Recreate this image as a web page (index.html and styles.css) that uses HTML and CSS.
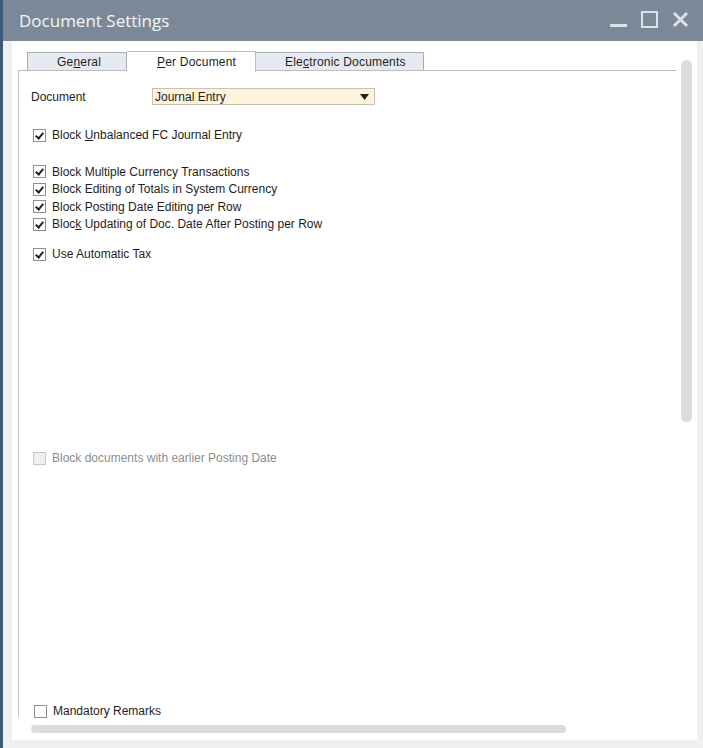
FILE: index.html
```html
<!DOCTYPE html>
<html lang="en">
<head>
    <meta charset="UTF-8">
    <title>Document Settings</title>
    <link rel="stylesheet" href="styles.css">
</head>
<body>
    <div class="window">
        <div class="titlebar">
            <div class="title">Document Settings</div>
            <div class="window-buttons">
                <svg class="win-btn" width="20" height="20" viewBox="0 0 20 20"><rect x="1" y="13" width="17" height="3" fill="#dde2e8"/></svg>
                <svg class="win-btn" width="20" height="20" viewBox="0 0 20 20"><rect x="2" y="1" width="15" height="15" fill="none" stroke="#dde2e8" stroke-width="2"/></svg>
                <svg class="win-btn" width="20" height="20" viewBox="0 0 20 20"><path d="M3 2 L16 15 M16 2 L3 15" stroke="#dde2e8" stroke-width="3"/></svg>
            </div>
        </div>

        <div class="main">
            <div class="content">
                <div class="tabs">
                    <div class="tab">Ge<u>n</u>eral</div>
                    <div class="tab active"><u>P</u>er Document</div>
                    <div class="tab">Ele<u>c</u>tronic Documents</div>
                </div>

                <div class="pane">
                    <div class="field-row">
                        <div class="field-label">Document</div>
                        <div class="dropdown">
                            <span>Journal Entry</span>
                            <svg width="9" height="6" viewBox="0 0 9 6"><path d="M0 0 L9 0 L4.5 6 Z" fill="#222"/></svg>
                        </div>
                    </div>

                    <div class="group group-first">
                        <label class="check-row"><span class="box checked"></span><span>Block <u>U</u>nbalanced FC Journal Entry</span></label>
                    </div>

                    <div class="group">
                        <label class="check-row"><span class="box checked"></span><span>Block Multiple Currency Transactions</span></label>
                        <label class="check-row"><span class="box checked"></span><span>Block Editing of Totals in System Currency</span></label>
                        <label class="check-row"><span class="box checked"></span><span>Block Posting Date Editing per Row</span></label>
                        <label class="check-row"><span class="box checked"></span><span>Bloc<u>k</u> Updating of Doc. Date After Posting per Row</span></label>
                    </div>

                    <div class="group group-tax">
                        <label class="check-row"><span class="box checked"></span><span>Use Automatic Tax</span></label>
                    </div>

                    <div class="group group-disabled">
                        <label class="check-row disabled"><span class="box"></span><span>Block documents with earlier Posting Date</span></label>
                    </div>

                    <div class="group group-remarks">
                        <label class="check-row"><span class="box"></span><span>Mandatory Remarks</span></label>
                    </div>
                </div>

                <div class="hscroll"></div>
            </div>
            <div class="vscroll"></div>
        </div>
    </div>
</body>
</html>
```

FILE: styles.css
```css
body {
    margin: 0;
    font-family: "Liberation Sans", Arial, sans-serif;
    font-size: 12px;
    color: #1e1e1e;
    background-color: #f0f0f0;
}
.window {
    width: 700px;
    height: 748px;
    border-left: 3px solid #3d5977;
    display: flex;
    flex-direction: column;
}
.titlebar {
    height: 41px;
    flex-shrink: 0;
    background-color: #7b8898;
    display: flex;
    align-items: center;
    justify-content: space-between;
    padding-left: 16px;
    padding-right: 12px;
}
.title {
    font-family: "Open Sans", sans-serif;
    font-size: 17px;
    color: #f4f6f8;
}
.window-buttons {
    display: flex;
    gap: 11px;
    margin-top: 1px;
}
.win-btn {
    display: block;
}
.main {
    flex: 1;
    display: flex;
    background-color: #fff;
    margin: 0 6px 8px 9px;
}
.content {
    width: 664px;
    display: flex;
    flex-direction: column;
}
.tabs {
    display: flex;
    padding-top: 10px;
    padding-left: 15px;
    height: 19px;
    box-sizing: content-box;
}
.tab {
    height: 18px;
    margin-top: 1px;
    line-height: 18px;
    padding-left: 29px;
    letter-spacing: 0.2px;
    background-color: #e5eaf0;
    border: 1px solid #a9adb2;
    border-bottom: none;
    box-sizing: border-box;
}
.tab:nth-child(1) { width: 100px; }
.tab:nth-child(2) { width: 129px; }
.tab:nth-child(3) { width: 169px; margin-left: -1px; }
.tab.active {
    height: 21px;
    margin-top: 0;
    padding-left: 30px;
    line-height: 20px;
    background-color: #fff;
    border-color: #bcbcbc;
    border-left: none;
    position: relative;
    z-index: 1;
}
.pane {
    margin-left: 6px;
    width: 658px;
    height: 647px;
    border-top: 1px solid #bdbdbd;
    border-left: 1px solid #c4c4c4;
    box-sizing: border-box;
    display: flex;
    flex-direction: column;
    padding-left: 12px;
}
.field-row {
    display: flex;
    align-items: center;
    margin-top: 17px;
    height: 17px;
}
.field-label {
    width: 121px;
}
.dropdown {
    width: 223px;
    height: 17px;
    box-sizing: border-box;
    background-color: #fdf3dd;
    border: 1px solid #c9c2b2;
    display: flex;
    align-items: center;
    justify-content: space-between;
    padding: 0 5px 0 2px;
}
.group {
    display: flex;
    flex-direction: column;
}
.group { margin-top: 19px; }
.group-first { margin-top: 21.5px; }
.group-tax { margin-top: 12.5px; }
.group-disabled { margin-top: 186.5px; }
.group-remarks { margin-top: auto; margin-bottom: -3px; margin-left: 1px; }
.check-row {
    display: flex;
    align-items: center;
    height: 17.5px;
    margin-left: 2px;
}
.box {
    width: 13px;
    height: 13px;
    box-sizing: border-box;
    border: 1px solid #8e8f8f;
    background-color: #fff;
    margin-right: 6px;
    position: relative;
}
.box.checked::after {
    content: "";
    position: absolute;
    left: 3px;
    top: 1px;
    width: 3px;
    height: 6px;
    border-right: 2px solid #222;
    border-bottom: 2px solid #222;
    transform: rotate(40deg);
}
.check-row.disabled {
    color: #8d8d8d;
}
.check-row.disabled .box {
    border-color: #c6c6c6;
    background-color: #efefef;
}
.hscroll {
    margin-top: 8px;
    margin-left: 19px;
    width: 535px;
    height: 8px;
    border-radius: 4px;
    background-color: #dcdcdc;
}
.vscroll {
    margin-top: 19px;
    margin-left: 5px;
    width: 11px;
    height: 362px;
    border-radius: 6px;
    background-color: #dcdcdc;
}
```
